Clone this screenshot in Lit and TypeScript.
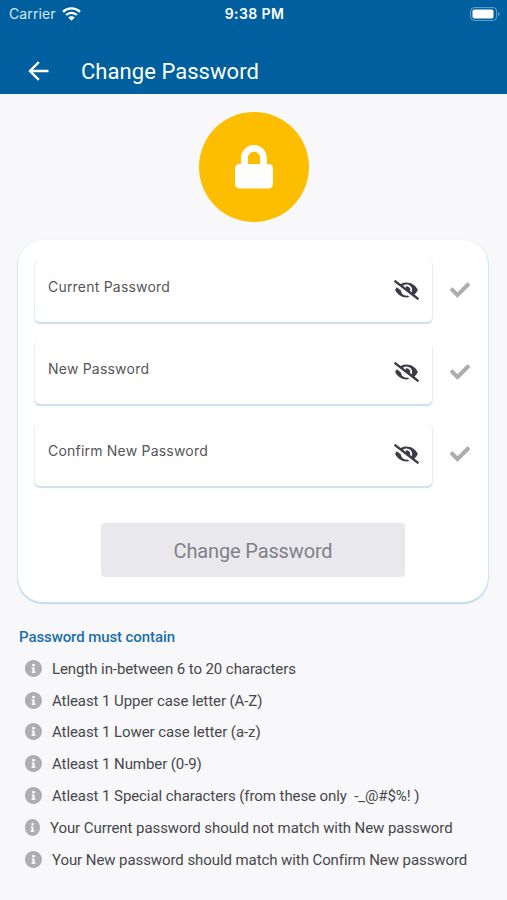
import { LitElement, html, css, svg } from "lit";
import { customElement } from "lit/decorators.js";

const FIELDS = ["Current Password", "New Password", "Confirm New Password"];

const RULES: { text: string; narrow?: boolean }[] = [
  { text: "Length in-between 6 to 20 characters" },
  { text: "Atleast 1 Upper case letter (A-Z)" },
  { text: "Atleast 1 Lower case letter (a-z)" },
  { text: "Atleast 1 Number (0-9)" },
  { text: "Atleast 1 Special characters (from these only  -_@#$%! )" },
  { text: "Your Current password should not match with New password", narrow: true },
  { text: "Your New password should match with Confirm New password" },
];

const INFO = svg`<path fill="#adaeb3" d="M256 8C119 8 8 119 8 256s111 248 248 248 248-111 248-248S393 8 256 8zm0 110a42 42 0 1 1 0 84 42 42 0 0 1 0-84zm56 254c0 6.600-5.400 12-12 12h-88c-6.600 0-12-5.400-12-12v-24c0-6.600 5.400-12 12-12h12v-64h-12c-6.600 0-12-5.400-12-12v-24c0-6.600 5.400-12 12-12h64c6.600 0 12 5.400 12 12v100h12c6.600 0 12 5.400 12 12z"/>`;

@customElement("app-root")
export class AppRoot extends LitElement {
  static styles = css`
    :host {
      display: block;
      height: 900px;
      overflow: hidden;
      background: #f8f8fb;
      font-family: Roboto, "Liberation Sans", sans-serif;
      color: #47474a;
    }
    svg { display: block; flex: none; }
    header { height: 94px; background: #005f9f; color: #fff; }
    .status {
      display: grid;
      grid-template-columns: 1fr auto 1fr;
      align-items: center;
      height: 27px;
      padding: 0 7px 0 9px;
      font-family: Inter, sans-serif;
      font-size: 14px;
    }
    .carrier { display: flex; align-items: center; gap: 6px; color: #d5e7f4; letter-spacing: 0.12px; }
    .time { font-weight: 600; letter-spacing: 0.4px; }
    .battery { justify-self: end; }
    .bar { display: flex; align-items: center; height: 50px; padding: 19px 0 0 28px; }
    .title { margin: 1px 0 0 32px; font-size: 22px; line-height: 26px; font-weight: 400; letter-spacing: 0.05px; white-space: nowrap; }
    .badge {
      width: 110px;
      height: 110px;
      border-radius: 50%;
      background: #fdbe00;
      margin: 18px auto 0 199px;
      display: flex;
      align-items: center;
      justify-content: center;
    }
    .badge svg { margin-right: 1px; }
    .card {
      margin: 18px 19px 0 18px;
      height: 362px;
      box-sizing: border-box;
      padding: 20px 17px 0;
      background: #fff;
      border-radius: 25px;
      box-shadow: 0 2px 1px 0 #c5dfe9, 0 1px 1px 0.5px #d3e7ef;
    }
    .row { display: flex; align-items: center; height: 62px; margin-bottom: 20px; }
    .field {
      width: 397px;
      height: 62px;
      box-sizing: border-box;
      padding: 0 13px 0 13px;
      border-radius: 5px;
      background: #fff;
      box-shadow: 0 1.5px 1px 0 #cfe2ec, 0 1px 1px 0.3px #e6f0f5;
      display: flex;
      align-items: center;
      justify-content: space-between;
    }
    .label { font-family: Inter, sans-serif; font-size: 14px; line-height: 20px; padding-bottom: 9px; letter-spacing: 0.21px; color: #55555a; white-space: nowrap; }
    .field svg { margin-bottom: 2px; }
    .check { margin: 0 0 2px 17.5px; }
    .submit {
      display: flex;
      align-items: center;
      justify-content: center;
      width: 304px;
      height: 54px;
      margin: 37px 0 0 66px;
      padding: 1px 0 0;
      border: 0;
      border-radius: 4px;
      background: #e9e9ed;
      color: #818187;
      font: 400 20px/24px Roboto, sans-serif;
      letter-spacing: -0.14px;
    }
    .rules { padding: 25px 0 0 19px; }
    h2 { margin: 0; font-size: 15px; line-height: 20px; font-weight: 500; letter-spacing: -0.09px; color: #1b6fab; }
    ul { list-style: none; margin: 6px 0 0; padding: 0 0 0 6px; }
    li { display: flex; align-items: center; height: 31.8px; gap: 10px; font-size: 15px; letter-spacing: -0.08px; white-space: pre; }
    li svg { margin-bottom: 1px; }
  `;

  render() {
    return html`
      <header>
        <div class="status">
          <div class="carrier">
            <span>Carrier</span>
            <svg width="19" height="14" viewBox="0 0 19 14" fill="none" stroke="#fff" stroke-width="2.400">
              <path d="M1 4.800a12.300 12.300 0 0 1 17 0M4.100 8a7.800 7.800 0 0 1 10.800 0" />
              <path fill="#fff" stroke="none" d="M9.500 13.800 6.200 10.500a4.700 4.700 0 0 1 6.600 0z" />
            </svg>
          </div>
          <span class="time">9:38 PM</span>
          <svg class="battery" width="30" height="14" viewBox="0 0 30 14">
            <rect x=".6" y=".6" width="26" height="12.800" rx="3.600" fill="none" stroke="#6ba3cb" />
            <rect x="2.500" y="2.500" width="21" height="9" rx="1.800" fill="#fff" />
            <path d="M28 5v4q1.600-.6 1.600-2T28 5z" fill="#6ba3cb" />
          </svg>
        </div>
        <div class="bar">
          <svg width="21" height="20" viewBox="0 0 21 20" fill="none" stroke="#fff" stroke-width="2.400">
            <path d="M20.500 10H2.500M10.800 1.200 2 10l8.800 8.800" />
          </svg>
          <h1 class="title">Change Password</h1>
        </div>
      </header>
      <div class="badge">
        <svg width="38" height="43.400" viewBox="0 0 448 512" fill="#fff">
          <path d="M400 224h-24v-72C376 68.200 307.800 0 224 0S72 68.200 72 152v72H48c-26.500 0-48 21.500-48 48v192c0 26.500 21.500 48 48 48h352c26.500 0 48-21.500 48-48V272c0-26.500-21.500-48-48-48zm-104 0H152v-72c0-39.700 32.300-72 72-72s72 32.300 72 72v72z" />
        </svg>
      </div>
      <section class="card">
        ${FIELDS.map(
          (label) => html`<div class="row">
            <div class="field">
              <span class="label">${label}</span>
              <svg width="25" height="20" viewBox="0 0 640 512" fill="#3c3b46">
                <path d="M320 400c-75.900 0-137.300-58.700-142.900-133.100L72.200 185.800c-13.800 17.300-26.500 35.600-36.700 55.600a32.400 32.400 0 0 0 0 29.200C89.700 376.400 197.100 448 320 448c26.900 0 52.900-4 77.900-10.500L346 397.400a144.100 144.100 0 0 1-26 2.600zm313.800 58.100l-110.600-85.500a331.300 331.300 0 0 0 81.300-102.100 32.400 32.400 0 0 0 0-29.200C550.300 135.600 442.900 64 320 64a308.200 308.200 0 0 0-147.300 37.700L45.500 3.400A16 16 0 0 0 23 6.200L3.400 31.500A16 16 0 0 0 6.200 53.900l588.400 454.700a16 16 0 0 0 22.500-2.800l19.600-25.300a16 16 0 0 0-2.800-22.500zM450.200 314.500l-39.300-30.400A94.800 94.800 0 0 0 416 256a94.800 94.800 0 0 0-121.300-92.200A47.700 47.700 0 0 1 304 192a46.600 46.600 0 0 1-1.500 10l-73.600-56.900A142.300 142.300 0 0 1 320 112a143.900 143.900 0 0 1 144 144c0 21.600-5.300 41.800-13.800 60z" />
              </svg>
            </div>
            <svg class="check" width="20" height="20" viewBox="0 0 512 512" fill="#adadad">
              <path d="M173.900 439.400L7.500 273c-10-10-10-26.200 0-36.200l36.200-36.200c10-10 26.200-10 36.200 0L192 312.700 432.100 72.600c10-10 26.200-10 36.200 0l36.200 36.200c10 10 10 26.200 0 36.200L210.100 439.400c-10 10-26.200 10-36.200 0z" />
            </svg>
          </div>`,
        )}
        <button class="submit">Change Password</button>
      </section>
      <section class="rules">
        <h2>Password must contain</h2>
        <ul>
          ${RULES.map(
            (r) => html`<li><svg width=${r.narrow ? 15 : 17} height="17" viewBox="8 8 496 496" preserveAspectRatio="none">${INFO}</svg><span>${r.text}</span></li>`,
          )}
        </ul>
      </section>
    `;
  }
}
